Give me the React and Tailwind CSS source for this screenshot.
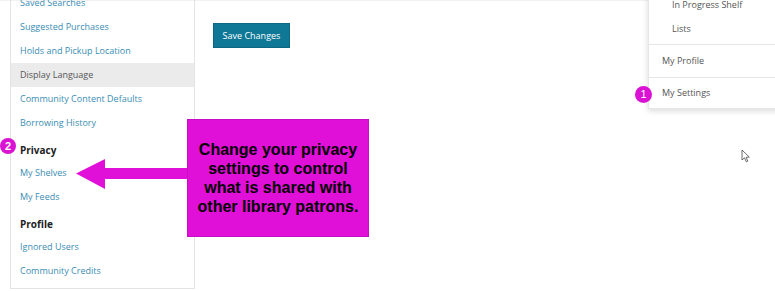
import React from "react";

const links1 = [
  "Saved Searches",
  "Suggested Purchases",
  "Holds and Pickup Location",
  "Display Language",
  "Community Content Defaults",
  "Borrowing History",
];

function Item({ label, active }) {
  return (
    <div
      className={
        "h-6 flex items-center pl-[9px] text-[9px] " +
        (active ? "bg-[#ebebeb] text-[#555555]" : "text-[#3b8db4]")
      }
    >
      {label}
    </div>
  );
}

function Heading({ label }) {
  return (
    <div className="mt-[4px] h-[22px] flex items-center pl-[9px] text-[10px] font-bold text-[#222222]">
      {label}
    </div>
  );
}

export default function App() {
  return (
    <div
      className="relative w-[775px] h-[291px] overflow-hidden bg-white"
      style={{ fontFamily: '"Open Sans", "Noto Sans", sans-serif' }}
    >
      <div className="flex h-full border-t border-[#f1f1f1]">
        <div className="w-[10px] shrink-0" />
        {/* Sidebar */}
        <div className="w-[185px] shrink-0 self-start border-l border-r border-b border-[#e3e3e3] -mt-[10px] pb-[5px]">
          {links1.map((l) => (
            <Item key={l} label={l} active={l === "Display Language"} />
          ))}
          <Heading label="Privacy" />
          <Item label="My Shelves" />
          <Item label="My Feeds" />
          <Heading label="Profile" />
          <Item label="Ignored Users" />
          <Item label="Community Credits" />
        </div>
        {/* Main */}
        <div className="flex-1 pl-[18px] pt-[22px]">
          <button className="h-[25px] w-[77px] bg-[#0e7896] border border-[#0b6782] text-white text-[9px] flex items-center justify-center">
            Save Changes
          </button>
        </div>
      </div>

      {/* Dropdown menu */}
      <div className="absolute left-[648px] top-[-7px] w-[140px] bg-white border-l border-b border-[#e6e6e6] shadow-[0_2px_6px_rgba(0,0,0,0.15)] text-[9px] text-[#555555]">
        <div className="h-6 flex items-center pl-[23px]">In Progress Shelf</div>
        <div className="h-6 flex items-center pl-[23px]">Lists</div>
        <div className="h-[3px]" />
        <div className="border-t border-[#e6e6e6] h-[33px] flex items-center pl-[13px]">My Profile</div>
        <div className="border-t border-[#e6e6e6] h-[31px] flex items-center pl-[13px]">My Settings</div>
      </div>

      {/* Badge 1 */}
      <div className="absolute left-[635px] top-[86px] w-[17px] h-[17px] rounded-full bg-[#d912d3] text-white text-[11px] flex items-center justify-center"
        style={{ fontFamily: '"Liberation Sans", Arial, sans-serif' }}>
        1
      </div>
      {/* Badge 2 */}
      <div className="absolute left-[0px] top-[138px] w-[16px] h-[16px] rounded-full bg-[#d912d3] text-white text-[11px] font-bold flex items-center justify-center"
        style={{ fontFamily: '"Liberation Sans", Arial, sans-serif' }}>
        2
      </div>

      {/* Arrow */}
      <svg className="absolute left-0 top-0" width="775" height="291" viewBox="0 0 775 291">
        <polygon points="76,173.5 105,159 105,168 190,168 190,179 105,179 105,189" fill="#e010d8" />
      </svg>

      {/* Callout */}
      <div
        className="absolute left-[187px] top-[119px] w-[182px] h-[118px] bg-[#e010d8] border border-[#c80ec2] flex items-center justify-center text-center text-black font-bold text-[16px] leading-[19px]"
        style={{ fontFamily: '"Liberation Sans", Arial, sans-serif' }}
      >
        <div>
          Change your privacy
          <br />
          settings to control
          <br />
          what is shared with
          <br />
          other library patrons.
        </div>
      </div>

      {/* Cursor */}
      <svg className="absolute left-[741px] top-[149px]" width="10" height="14" viewBox="0 0 10 14">
        <path d="M1 1 L1 11 L3.5 8.8 L5.3 12.8 L6.8 12.1 L5.1 8.3 L8.3 8.1 Z" fill="white" stroke="#444" strokeWidth="0.8" strokeLinejoin="round" />
      </svg>
    </div>
  );
}
